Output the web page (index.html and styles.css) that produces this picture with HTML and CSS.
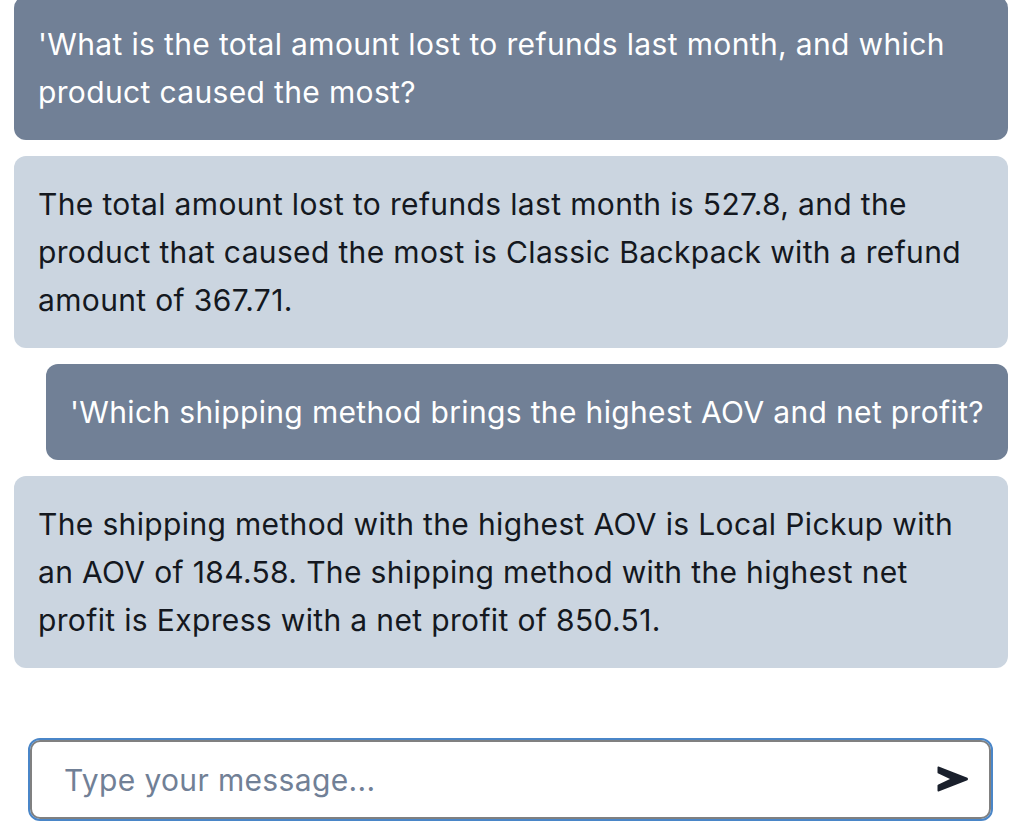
FILE: index.html
```html
<!DOCTYPE html>
<html lang="en">
<head>
<meta charset="utf-8">
<title>Chat</title>
<link rel="stylesheet" href="styles.css">
</head>
<body>
<div class="app">
  <div class="messages">
    <div class="bubble user">'What is the total amount lost to refunds last month, and which product caused the most?</div>
    <div class="bubble bot">The total amount lost to refunds last month is 527.8, and the product that caused the most is Classic Backpack with a refund amount of 367.71.</div>
    <div class="bubble user">'Which shipping method brings the highest AOV and net profit?</div>
    <div class="bubble bot">The shipping method with the highest AOV is Local Pickup with an AOV of 184.58. The shipping method with the highest net profit is Express with a net profit of 850.51.</div>
  </div>
  <form class="composer">
    <div class="field">
      <input class="input" type="text" placeholder="Type your message...">
      <button class="send" type="button" aria-label="Send">
        <svg width="32" height="26" viewBox="0 0 32 26"><path d="M1.6 0.6 L30.4 11.7 Q31.8 13 30.4 14.3 L1.6 25.4 Q0.5 25.7 0.5 24.4 L0.5 19.6 Q0.5 18.8 1.4 18.4 L13 13 L1.4 7.6 Q0.5 7.2 0.5 6.4 L0.5 1.6 Q0.5 0.3 1.6 0.6 Z" fill="#1a202c"/></svg>
      </button>
    </div>
  </form>
</div>
</body>
</html>
```
FILE: styles.css
```css
* { box-sizing: border-box; }
html, body { margin: 0; padding: 0; background: #ffffff; }
body {
  font-family: Inter, "Noto Sans", "Liberation Sans", sans-serif;
  font-size: 30px;
  letter-spacing: 0.35px;
  line-height: 48px;
}
.app {
  height: 100vh;
  display: flex;
  flex-direction: column;
}
.messages {
  flex: 1;
  min-height: 0;
  overflow: hidden;
  display: flex;
  flex-direction: column;
  justify-content: flex-end;
  gap: 16px;
  padding: 0 5px 16px 14px;
}
.bubble {
  flex-shrink: 0;
  padding: 24px;
  border-radius: 12px;
}
.user {
  align-self: flex-end;
  background: #718096;
  color: #ffffff;
}
.bot {
  background: #cbd5e0;
  color: #141820;
}
.composer {
  margin: 0;
  padding: 56px 22px 13px 30px;
}
.field {
  position: relative;
}
.input {
  display: block;
  width: 100%;
  height: 79px;
  border: 2px solid #808080;
  border-radius: 10px;
  outline: 2px solid #4a86c8;
  outline-offset: 0;
  padding: 0 80px 0 32px;
  font-family: inherit;
  font-size: 30px;
  letter-spacing: 0.35px;
  color: #1a202c;
  background: #ffffff;
}
.input::placeholder { color: #718096; }
.send {
  position: absolute;
  right: 22px;
  top: 50%;
  transform: translateY(-50%);
  margin-top: -1px;
  padding: 0;
  border: 0;
  background: none;
  display: flex;
}
```
